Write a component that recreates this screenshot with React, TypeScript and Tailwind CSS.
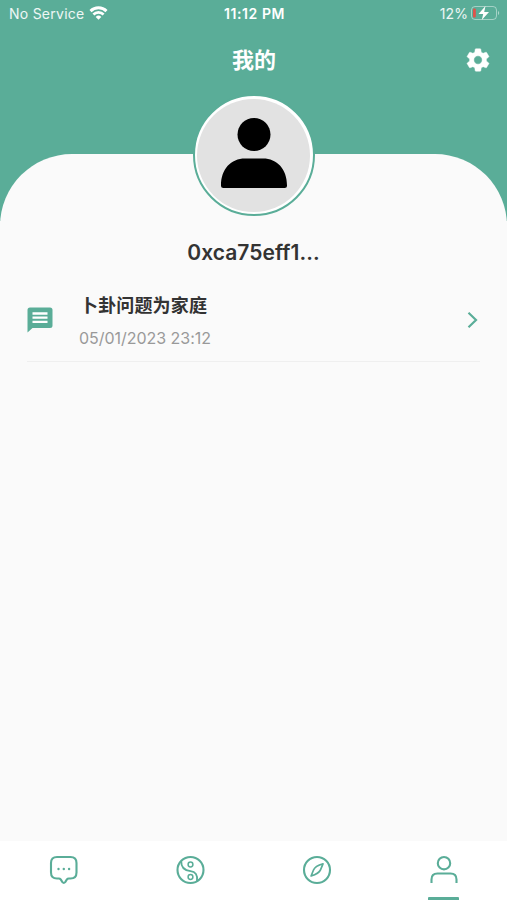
import type { ReactNode } from "react";

function StatusBar() {
  return (
    <div className="grid h-7 grid-cols-3 items-center pl-[9px] pr-[7px] text-[14px] text-white/90">
      <div className="flex items-center gap-[5px]">
        <span className="-mt-px whitespace-nowrap tracking-[0.25px]">No Service</span>
        <svg className="-mt-[2px] h-[14px] w-[19px]" viewBox="0 0 18 14" fill="none" stroke="#fff">
          <path d="M1 5.100a11.400 11.400 0 0 1 16 0" strokeWidth="2.900" />
          <path d="M3.900 8.500a7.200 7.200 0 0 1 10.200 0" strokeWidth="2.600" />
          <path d="M9 13.800 6.200 10.900a4 4 0 0 1 5.600 0z" fill="#fff" stroke="none" />
        </svg>
      </div>
      <span className="-mt-px text-center text-[14px] font-semibold tracking-[0.6px] text-white">11:12 PM</span>
      <div className="-mt-[2px] flex items-center justify-end gap-[3px]">
        <span className="tracking-[0.1px]">12%</span>
        <svg className="h-4 w-[29px]" viewBox="0 0 29 16" fill="none">
          <rect x="0.5" y="1.5" width="25" height="13" rx="3.5" stroke="#fff" strokeOpacity="0.45" />
          <path d="M27 6v4c1.600-.5 1.600-3.500 0-4z" fill="#fff" fillOpacity="0.5" />
          <rect x="2" y="3.500" width="2.800" height="9" rx="1" fill="#e0524a" />
          <path d="M14.500 1 7.500 9h4.700l-1.400 6L18 7h-4.800z" fill="#fff" />
        </svg>
      </div>
    </div>
  );
}

function Header() {
  return (
    <div className="grid h-16 grid-cols-3 items-center pl-4 pr-[15px] text-white">
      <span />
      <h1 className="text-center text-[22px] font-bold leading-none">我的</h1>
      <svg className="h-7 w-7 justify-self-end" viewBox="0 0 24 24" fill="#fff" stroke="#fff" strokeWidth="0.400" strokeLinejoin="round">
        <path d="M19.140 12.940c.04-.3.06-.61.06-.94s-.02-.64-.07-.94l2.030-1.580a.49.49 0 0 0 .12-.61l-1.920-3.320a.488.488 0 0 0-.59-.22l-2.390.96c-.5-.38-1.030-.7-1.620-.94l-.36-2.540a.484.484 0 0 0-.48-.41h-3.840a.48.48 0 0 0-.47.41l-.36 2.540c-.59.24-1.130.57-1.620.94l-2.390-.96a.48.48 0 0 0-.59.22L2.740 8.870a.47.47 0 0 0 .12.61l2.030 1.580c-.05.3-.09.63-.09.94s.02.64.07.94l-2.030 1.580a.49.49 0 0 0-.12.61l1.920 3.320c.12.22.37.29.59.22l2.390-.96c.5.38 1.030.7 1.620.94l.36 2.540c.05.24.24.41.48.41h3.840c.24 0 .44-.17.47-.41l.36-2.540c.59-.24 1.130-.56 1.620-.94l2.390.96c.22.08.47 0 .59-.22l1.920-3.320a.47.47 0 0 0-.12-.61zM12 15.600a3.600 3.600 0 1 1 0-7.200 3.600 3.600 0 0 1 0 7.200z" />
      </svg>
    </div>
  );
}

function Avatar() {
  return (
    <div className="-mt-[60px] flex h-[122px] w-[122px] items-center justify-center rounded-full border-2 border-[#5aad98] bg-white">
      <div className="flex h-[113px] w-[113px] justify-center rounded-full bg-[#e2e2e2]">
        <svg className="mt-[18.500px] h-[72px] w-[68px]" viewBox="0 0 68 72">
          <circle cx="34" cy="17.500" r="16.500" />
          <path d="M1 68.500C1 52 11 41.500 25 41.500h18c14 0 24 10.500 24 27a2.500 2.500 0 0 1-2.500 2.500h-61A2.500 2.500 0 0 1 1 68.500z" />
        </svg>
      </div>
    </div>
  );
}

function RecordItem({ title, date }: { title: string; date: string }) {
  return (
    <li className="mx-[27px] flex h-[77px] items-center border-b border-[#efefef]">
      <svg className="mt-[-7px] h-[26px] w-[26px]" viewBox="0 0 26 26">
        <path d="M3 .5h20A2.500 2.500 0 0 1 25.500 3v15.500A2.500 2.500 0 0 1 23 21H5.500L.5 25.500V3A2.500 2.500 0 0 1 3 .5z" fill="#5aad98" />
        <path d="M5.500 6.500h15M5.500 10.700h15M5.500 14.900h15" stroke="#fff" strokeWidth="2.300" />
      </svg>
      <div className="-mt-[5px] ml-[27px] flex flex-1 flex-col">
        <p className="text-[18px] font-bold leading-[26px] tracking-[0.15px] text-[#333]">{title}</p>
        <p className="-ml-px mt-[8px] text-[16px] leading-[22px] tracking-[-0.03px] text-[#999]">{date}</p>
      </div>
      <svg className="mr-[2px] mt-[-6px] h-[18px] w-[11px]" viewBox="0 0 11 18" fill="none" stroke="#5aad98" strokeWidth="2.200">
        <path d="m1.500 1.800 7.500 7.200-7.500 7.200" />
      </svg>
    </li>
  );
}

function TabItem({ active, children }: { active?: boolean; children: ReactNode }) {
  return (
    <button className="flex flex-col items-center justify-between pt-[14px]">
      <svg className="h-[30px] w-[30px]" viewBox="0 0 30 30" fill="none" stroke="#5aad98" strokeWidth="2.100">
        {children}
      </svg>
      {active && <span className="h-[3px] w-[31px] rounded-t-[1px] bg-[#5aad98]" />}
    </button>
  );
}

function TabBar() {
  return (
    <nav className="grid h-[59px] grid-cols-4 bg-white">
      <TabItem>
        <path d="M9 2h13.500q6 0 6 6v9.500q0 6-6 6h-1.700q-1.200 0-1.900.9l-1.700 2.700q-1.400 1.500-2.800 0l-1.700-2.700q-.7-.9-1.900-.9H9q-6 0-6-6V8q0-6 6-6z" />
        <g fill="#5aad98" stroke="none">
          <circle cx="10.500" cy="14" r="1.200" />
          <circle cx="15.800" cy="14" r="1.200" />
          <circle cx="21.100" cy="14" r="1.200" />
        </g>
      </TabItem>
      <TabItem>
        <circle cx="15.500" cy="15" r="13" />
        <path d="M6.200 6C6 12 9.500 15.500 15.500 16.200C20.500 16.800 22.800 20 22 26" strokeWidth="1.800" />
        <circle cx="15.500" cy="9.500" r="2.400" strokeWidth="1.500" />
        <circle cx="15.500" cy="22" r="2.400" strokeWidth="1.500" />
      </TabItem>
      <TabItem>
        <circle cx="15" cy="15" r="13" />
        <path d="M21 8.800c-5 1.400-8.500 3.700-9.500 6.200l-2.400 6c4.700-1.500 8.300-3.700 9.400-6.200z" strokeWidth="1.700" strokeLinejoin="round" />
      </TabItem>
      <TabItem active>
        <circle cx="15" cy="8.200" r="6.200" />
        <path d="M2.500 28v-3.500q0-6 6-6h13q6 0 6 6V28" />
      </TabItem>
    </nav>
  );
}

export default function App() {
  return (
    <div className="flex h-[900px] w-full flex-col overflow-hidden bg-[#fafafa] font-['Inter','Noto_Sans_CJK_SC',sans-serif]">
      {/* 顶部 */}
      <header className="h-[221px] shrink-0 bg-[#5aad98]">
        <StatusBar />
        <Header />
      </header>

      {/* 内容 */}
      <main className="-mt-[67px] flex flex-1 flex-col items-center rounded-t-[72px] bg-[#fafafa]">
        <Avatar />
        <h2 className="mt-[22px] text-[21px] font-semibold leading-[30px] tracking-[0.05px] text-[#333]">0xca75eff1...</h2>
        <ul className="mt-[17px] w-full">
          <RecordItem title="卜卦问题为家庭" date="05/01/2023 23:12" />
        </ul>
      </main>

      {/* 底部导航 */}
      <TabBar />
    </div>
  );
}
